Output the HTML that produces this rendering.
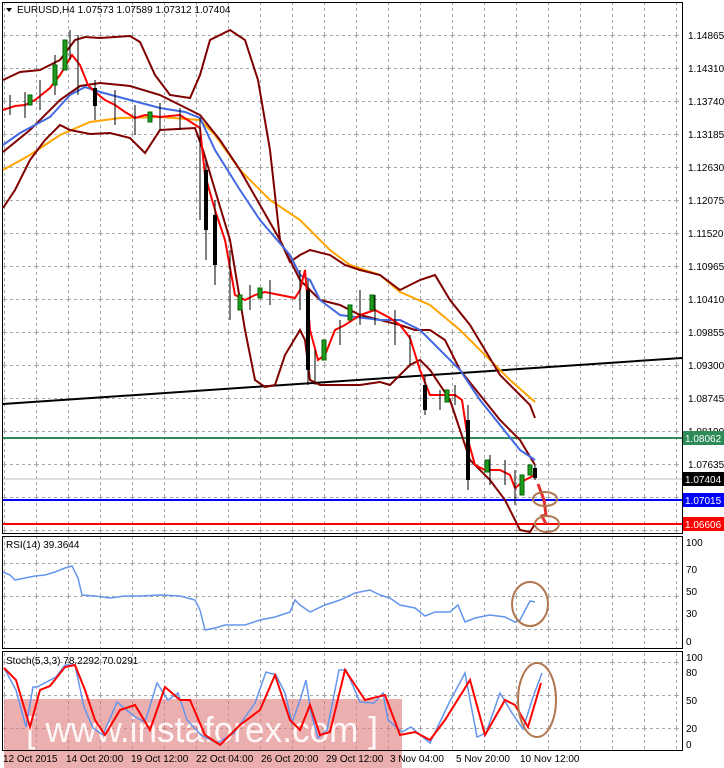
<!DOCTYPE html>
<html><head><style>
body{margin:0;background:#fff;width:724px;height:768px;overflow:hidden;font-family:"Liberation Sans",sans-serif}
svg{display:block}
text{font-family:"Liberation Sans",sans-serif;font-size:10px;fill:#000}
</style></head><body>
<svg width="724" height="768" viewBox="0 0 724 768">
<defs>
<pattern id="g" width="32" height="33" patternUnits="userSpaceOnUse" x="4" y="2">
<path d="M0.5 0V33M0 0.5H32" stroke="#a8a8a8" stroke-dasharray="3,3" fill="none"/>
</pattern>
</defs>
<rect x="3" y="2" width="679" height="531" fill="url(#g)"/>
<rect x="3" y="537" width="679" height="111" fill="url(#g)"/>
<rect x="3" y="652" width="679" height="98" fill="url(#g)"/>

<!-- watermark -->
<rect x="4" y="699" width="398" height="69" fill="#e07a7a" opacity="0.6"/>
<text x="26" y="742" textLength="352" lengthAdjust="spacingAndGlyphs" style="font-size:36px;fill:#fff;opacity:0.9">[ www.instaforex.com ]</text>

<rect x="2.5" y="2.5" width="680" height="531" fill="none" stroke="#000"/>
<rect x="2.5" y="536.5" width="680" height="112" fill="none" stroke="#000"/>
<rect x="2.5" y="651.5" width="680" height="99" fill="none" stroke="#000"/>

<line x1="3" y1="438" x2="682" y2="438" stroke="#2e8b57" stroke-width="2"/>
<line x1="3" y1="479" x2="682" y2="479" stroke="#bbb" stroke-width="1"/>
<line x1="3" y1="500" x2="682" y2="500" stroke="#0000ff" stroke-width="2"/>
<line x1="3" y1="524" x2="682" y2="524" stroke="#ff0000" stroke-width="2"/>
<line x1="3" y1="404" x2="682" y2="358" stroke="#000" stroke-width="2"/>

<polyline fill="none" stroke="#ffa500" stroke-width="2" points="3,170 30,155 60,135 90,122 120,118 160,117 200,120 215,135 240,170 270,200 300,220 330,250 350,265 380,275 400,292 430,305 460,330 490,360 510,380 535,402"/>
<polyline fill="none" stroke="#800000" stroke-width="2" points="3,80 20,72 40,70 60,60 75,40 85,37 100,38 130,36 140,42 155,75 170,95 190,98 200,75 210,40 230,30 245,40 258,80 270,150 280,240 290,262 300,255 310,250 330,255 345,265 360,270 380,275 400,290 420,280 435,275 450,300 470,325 500,375 520,395 530,405 535,418"/>
<polyline fill="none" stroke="#800000" stroke-width="2" points="3,152 30,130 60,100 80,86 100,83 130,86 160,95 200,115 220,140 240,170 260,205 280,240 300,280 320,300 340,305 360,315 380,320 400,325 415,330 430,330 445,340 460,370 480,395 500,420 520,440 535,465"/>
<polyline fill="none" stroke="#800000" stroke-width="2" points="3,208 15,190 30,160 45,140 60,125 70,130 90,134 110,133 130,138 145,153 160,130 195,128 203,150 215,190 230,240 245,330 255,380 265,387 275,385 285,355 300,330 305,340 310,380 320,385 360,385 380,382 390,385 400,375 410,365 420,360 430,370 450,400 470,460 490,480 505,500 520,530 530,532 535,524"/>
<polyline fill="none" stroke="#4169e1" stroke-width="2" points="3,145 20,133 50,117 70,95 85,87 100,92 130,100 160,108 185,112 200,118 215,150 240,190 260,220 290,255 300,275 310,280 320,300 340,315 380,320 400,320 420,330 440,350 460,370 480,400 500,425 520,450 535,460"/>
<polyline fill="none" stroke="#ff0000" stroke-width="2" points="3,110 15,106 25,105 35,100 50,88 60,75 72,55 80,65 88,85 95,92 105,100 115,105 125,112 135,118 145,115 160,117 180,115 200,128 205,175 215,210 225,240 235,295 245,300 255,295 265,292 280,295 295,298 300,290 305,270 310,330 318,360 325,355 335,330 345,325 360,315 375,310 390,318 400,325 410,338 420,370 430,395 440,395 455,395 462,400 468,440 475,465 485,470 500,470 510,475 515,488 525,480 535,475"/>
<g stroke-width="1">
<g stroke="#000"><line x1="10" y1="95" x2="10" y2="115"/><line x1="25" y1="92" x2="25" y2="118"/><line x1="40" y1="80" x2="40" y2="110"/><line x1="55" y1="55" x2="55" y2="95"/><line x1="70" y1="30" x2="70" y2="60"/><line x1="78" y1="35" x2="78" y2="95"/><line x1="95" y1="80" x2="95" y2="120"/><line x1="115" y1="90" x2="115" y2="125"/><line x1="135" y1="105" x2="135" y2="135"/><line x1="160" y1="103" x2="160" y2="130"/><line x1="180" y1="108" x2="180" y2="130"/><line x1="200" y1="118" x2="200" y2="220"/><line x1="206" y1="160" x2="206" y2="260"/><line x1="215" y1="200" x2="215" y2="285"/><line x1="230" y1="250" x2="230" y2="320"/><line x1="250" y1="285" x2="250" y2="310"/><line x1="270" y1="280" x2="270" y2="305"/><line x1="300" y1="270" x2="300" y2="310"/><line x1="308" y1="280" x2="308" y2="385"/><line x1="315" y1="350" x2="315" y2="385"/><line x1="340" y1="320" x2="340" y2="345"/><line x1="360" y1="290" x2="360" y2="325"/><line x1="375" y1="295" x2="375" y2="325"/><line x1="395" y1="310" x2="395" y2="345"/><line x1="410" y1="335" x2="410" y2="365"/><line x1="425" y1="375" x2="425" y2="415"/><line x1="440" y1="390" x2="440" y2="410"/><line x1="455" y1="385" x2="455" y2="405"/><line x1="468" y1="405" x2="468" y2="490"/><line x1="490" y1="455" x2="490" y2="485"/><line x1="505" y1="460" x2="505" y2="485"/><line x1="515" y1="470" x2="515" y2="505"/><line x1="535" y1="465" x2="535" y2="480"/></g>
<g fill="#000"><rect x="93" y="88" width="4" height="18"/><rect x="204" y="170" width="4" height="60"/><rect x="213" y="215" width="4" height="50"/><rect x="306" y="290" width="4" height="80"/><rect x="423" y="385" width="4" height="25"/><rect x="466" y="420" width="4" height="60"/><rect x="533" y="468" width="4" height="10"/></g>
<g fill="#1f9a1f" stroke="#006400"><rect x="53" y="65" width="4" height="20"/><rect x="63" y="40" width="4" height="30"/><rect x="28" y="95" width="4" height="10"/><rect x="148" y="112" width="4" height="10"/><rect x="238" y="295" width="4" height="15"/><rect x="258" y="288" width="4" height="10"/><rect x="322" y="340" width="4" height="20"/><rect x="348" y="305" width="4" height="15"/><rect x="370" y="295" width="4" height="15"/><rect x="445" y="390" width="4" height="12"/><rect x="485" y="460" width="4" height="12"/><rect x="520" y="475" width="4" height="20"/><rect x="528" y="465" width="4" height="10"/></g>
</g>
<path d="M538 484 L544 500 L546 515 L542 516 L546 524" fill="none" stroke="#e03030" stroke-width="3"/>
<ellipse cx="545" cy="499" rx="12" ry="7" fill="none" stroke="#b07850" stroke-width="2"/>
<ellipse cx="547" cy="524" rx="12" ry="8" fill="none" stroke="#b07850" stroke-width="2"/>

<g>
<text x="688" y="39">1.14865</text><text x="688" y="72">1.14310</text><text x="688" y="105">1.13740</text><text x="688" y="138">1.13185</text><text x="688" y="171">1.12630</text><text x="688" y="204">1.12075</text><text x="688" y="237">1.11520</text><text x="688" y="270">1.10965</text><text x="688" y="303">1.10410</text><text x="688" y="336">1.09855</text><text x="688" y="369">1.09300</text><text x="688" y="402">1.08745</text><text x="688" y="435">1.08190</text><text x="688" y="468">1.07635</text>
</g>
<rect x="683" y="431" width="41" height="14" fill="#2e8b57"/><text x="685" y="442" style="fill:#fff">1.08062</text>
<rect x="683" y="472" width="41" height="14" fill="#000"/><text x="685" y="483" style="fill:#fff">1.07404</text>
<rect x="683" y="493" width="41" height="14" fill="#0000ff"/><text x="685" y="504" style="fill:#fff">1.07015</text>
<rect x="683" y="517" width="41" height="14" fill="#ff0000"/><text x="685" y="528" style="fill:#fff">1.06606</text>

<path d="M6 8 L12 8 L9 12 Z" fill="#000"/>
<text x="17" y="13">EURUSD,H4  1.07573 1.07589 1.07312 1.07404</text>

<text x="6" y="548">RSI(14) 39.3644</text>
<text x="686" y="546">100</text><text x="686" y="573">70</text><text x="686" y="595">50</text><text x="686" y="617">30</text><text x="686" y="645">0</text>
<polyline fill="none" stroke="#6495ed" stroke-width="1.5" points="3,572 10,575 15,580 25,578 35,576 45,575 55,572 65,568 72,566 78,578 82,595 95,596 110,598 125,596 140,596 160,595 180,596 195,600 200,610 205,630 215,628 225,625 245,625 260,620 275,617 290,612 295,600 300,605 310,612 325,605 340,600 355,593 370,590 380,595 390,598 400,605 415,608 425,616 435,612 450,612 458,605 465,622 475,618 490,615 505,617 515,622 520,620 530,601 535,602"/>
<ellipse cx="530" cy="604" rx="18" ry="22" fill="none" stroke="#b07850" stroke-width="2"/>

<text x="6" y="664">Stoch(5,3,3) 78.2292 70.0291</text>
<text x="686" y="661">100</text><text x="686" y="676">80</text><text x="686" y="704">50</text><text x="686" y="732">20</text><text x="686" y="748">0</text>
<polyline fill="none" stroke="#6495ed" stroke-width="1.5" points="4,668 16,690 26,727 33,687 37,687 56,677 65,665 75,665 84,707 93,728 103,735 117,702 135,717 145,722 157,683 168,700 178,693 187,720 201,735 217,743 234,733 255,703 266,672 276,675 285,693 292,723 301,697 306,680 311,713 318,738 327,730 339,670 346,670 360,702 374,703 383,693 388,720 402,732 411,727 430,743 449,703 465,673 477,737 486,733 500,693 512,713 523,729 533,697 542,673"/>
<polyline fill="none" stroke="#ff0000" stroke-width="2" points="4,668 16,680 30,727 40,690 50,686 65,667 75,665 85,690 95,720 105,735 120,710 135,705 150,730 165,687 180,700 190,700 205,735 220,745 240,725 260,710 275,675 290,720 300,730 310,705 320,735 330,732 345,670 365,700 385,695 400,735 415,732 430,740 445,720 470,680 485,735 505,700 515,705 528,727 541,683"/>
<ellipse cx="537" cy="700" rx="19" ry="37" fill="none" stroke="#b07850" stroke-width="2"/>

<g>
<text x="3" y="762">12 Oct 2015</text><text x="66" y="762">14 Oct 20:00</text><text x="131" y="762">19 Oct 12:00</text><text x="196" y="762">22 Oct 04:00</text><text x="261" y="762">26 Oct 20:00</text><text x="326" y="762">29 Oct 12:00</text><text x="390" y="762">3 Nov 04:00</text><text x="456" y="762">5 Nov 20:00</text><text x="520" y="762">10 Nov 12:00</text>
</g>
</svg>
</body></html>
